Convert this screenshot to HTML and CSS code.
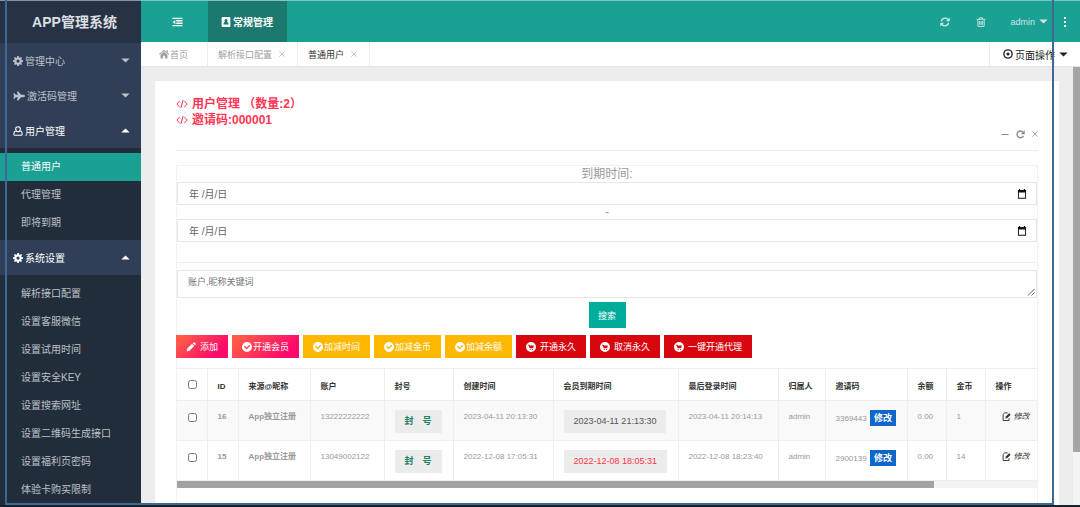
FILE: index.html
```html
<!DOCTYPE html>
<html lang="zh-CN">
<head>
<meta charset="utf-8">
<title>APP管理系统</title>
<link rel="stylesheet" href="styles.css">
</head>
<body>
<svg class="sprite" aria-hidden="true">
  <symbol id="gear" viewBox="0 0 16 16"><path fill-rule="evenodd" d="M6.800 0h2.400l.4 2.200 1.400.6L12.900 1.500l1.600 1.600-1.300 1.900.6 1.400 2.200.4v2.400l-2.200.4-.6 1.400 1.300 1.900-1.600 1.600-1.900-1.300-1.400.6-.4 2.200H6.800l-.4-2.200-1.400-.6-1.900 1.300-1.600-1.600 1.300-1.900-.6-1.400L0 9.200V6.800l2.200-.4.6-1.400-1.300-1.900 1.600-1.600L5 2.800l1.400-.6zM8 5.400a2.600 2.600 0 1 0 0 5.200 2.600 2.600 0 0 0 0-5.200z"/></symbol>
  <symbol id="plane" viewBox="0 0 16 16"><path d="M16 8c0 1-1.300 1.600-2.800 1.600h-2.400L7 14H5.200l1.300-4.400H3.700L2 11.800H.6L1.300 8 .6 4.200H2l1.700 2.200h2.800L5.200 2H7l3.800 4.400h2.400C14.700 6.400 16 7 16 8z"/></symbol>
  <symbol id="user" viewBox="0 0 16 16"><path fill="none" stroke="currentColor" stroke-width="1.700" d="M8 1.200a3.700 3.700 0 0 1 3.700 3.700c0 2.300-1.500 4.300-3.700 4.300S4.300 7.200 4.300 4.900A3.700 3.700 0 0 1 8 1.200zM4.700 7.600C2.400 8.200 1.300 10.300 1.300 12.600c0 1.400.9 2.200 2.200 2.200h9c1.300 0 2.200-.8 2.200-2.200 0-2.300-1.100-4.400-3.400-5"/></symbol>
  <symbol id="outdent" viewBox="0 0 16 16"><path d="M0 1h16v2.200H0zM6 4.900h10v2.200H6zM6 8.800h10V11H6zM0 12.700h16v2.200H0zM4.500 4.600v6.800L.3 8z"/></symbol>
  <symbol id="book" viewBox="0 0 16 16"><path fill-rule="evenodd" d="M2.500 0h11A1.500 1.500 0 0 1 15 1.500v13a1.500 1.500 0 0 1-1.500 1.500h-11A1.500 1.500 0 0 1 1 14.500v-13A1.500 1.500 0 0 1 2.500 0zM8 3.200a2.500 2.500 0 0 0-1.700 4.300C4.700 8.200 4 9.800 4 12h8c0-2.200-.7-3.800-2.300-4.500A2.500 2.500 0 0 0 8 3.200z"/></symbol>
  <symbol id="home" viewBox="0 0 16 16"><path d="M8 1l8 7-1 1.200-7-6-7 6L0 8zM12 1.800h2v4l-2-1.800zM8 4.500l5.600 4.800V15H9.500v-4.200h-3V15H2.400V9.300z"/></symbol>
  <symbol id="refresh" viewBox="0 0 16 16"><path fill="none" stroke="currentColor" stroke-width="2.200" d="M2 6.800A6.200 6.200 0 0 1 12.800 4M14 9.200A6.200 6.200 0 0 1 3.200 12"/><path d="M15.500.8v6H9.500zM.5 15.200v-6h6z"/></symbol>
  <symbol id="trash" viewBox="0 0 16 16"><path fill="none" stroke="currentColor" stroke-width="1.500" d="M3 4.500V15h10V4.500M1 3.700h14M5.300 3.500L6 1.200h4l.7 2.300M5.800 6.500v6M8 6.500v6M10.200 6.500v6"/></symbol>
  <symbol id="target" viewBox="0 0 16 16"><circle cx="8" cy="8" r="6.600" fill="none" stroke="currentColor" stroke-width="2.200"/><circle cx="8" cy="8" r="2.500"/></symbol>
  <symbol id="code" viewBox="0 0 18 16"><path fill="none" stroke="currentColor" stroke-width="1.500" d="M5.500 3.500L1.300 8l4.200 4.500M12.500 3.500L16.700 8l-4.200 4.500M10.600 2L7.400 14"/></symbol>
  <symbol id="reload" viewBox="0 0 16 16"><path fill="none" stroke="currentColor" stroke-width="2.400" d="M13.300 10.500A6 6 0 1 1 12.500 4"/><path d="M15.500.5v7H8.500z"/></symbol>
  <symbol id="cross" viewBox="0 0 16 16"><path fill="none" stroke="currentColor" stroke-width="2" d="M1 1l14 14M15 1L1 15"/></symbol>
  <symbol id="minus" viewBox="0 0 16 16"><path d="M1 8h14v2H1z"/></symbol>
  <symbol id="calendar" viewBox="0 0 16 16"><path fill-rule="evenodd" d="M3 0h2v1.500h6V0h2v1.500h1.500v14h-13v-14H3zM3 5.500V14h10V5.500z"/></symbol>
  <symbol id="pencil" viewBox="0 0 16 16"><path d="M1 15l1-4.500L9.700 2.800l3.500 3.500L5.500 14zM10.700 1.800l1.200-1.200c.5-.5 1.200-.5 1.700 0l1.800 1.800c.5.5.5 1.200 0 1.700l-1.200 1.200z"/></symbol>
  <symbol id="check" viewBox="0 0 16 16"><path fill-rule="evenodd" d="M8 0a8 8 0 1 1 0 16A8 8 0 0 1 8 0zM4.600 6L3 7.600l4.300 4.300 6-6-1.600-1.600-4.400 4.400z"/></symbol>
  <symbol id="cart" viewBox="0 0 16 16"><path fill-rule="evenodd" d="M8 0a8 8 0 1 1 0 16A8 8 0 0 1 8 0zM3.500 4.500V6h1.200l1 4h5.800l1-4.600H6.200l-.3-.9zM6 11v1.500h1.600V11zM9.600 11v1.500h1.600V11z"/></symbol>
  <symbol id="edit" viewBox="0 0 16 16"><path fill="none" stroke="currentColor" stroke-width="1.700" d="M10 1.500H4.500L2 4.500V15h10.500v-4"/><path d="M6 11.500l.7-3.500L12.700 2l2.800 2.800L9.500 10.800z"/></symbol>
  <symbol id="down" viewBox="0 0 10 6"><path d="M0 .5h10L5 5.500z"/></symbol>
  <symbol id="up" viewBox="0 0 10 6"><path d="M0 5.500h10L5 .5z"/></symbol>
  <symbol id="grip" viewBox="0 0 8 8"><path fill="none" stroke="currentColor" d="M1 7.500L7.500 1M4.500 7.500l3-3"/></symbol>
</svg>

<div class="app">
  <aside class="sidebar">
    <h1 class="logo">APP管理系统</h1>
    <nav>
      <button class="group"><svg class="ico"><use href="#gear"/></svg>管理中心<svg class="caret"><use href="#down"/></svg></button>
      <button class="group"><svg class="ico wide-ico"><use href="#plane"/></svg>激活码管理<svg class="caret"><use href="#down"/></svg></button>
      <button class="group open"><svg class="ico"><use href="#user"/></svg>用户管理<svg class="caret"><use href="#up"/></svg></button>
      <ul class="sub">
        <li><a class="active" href="#">普通用户</a></li>
        <li><a href="#">代理管理</a></li>
        <li><a href="#">即将到期</a></li>
      </ul>
      <button class="group open"><svg class="ico"><use href="#gear"/></svg>系统设置<svg class="caret"><use href="#up"/></svg></button>
      <ul class="sub">
        <li><a href="#">解析接口配置</a></li>
        <li><a href="#">设置客服微信</a></li>
        <li><a href="#">设置试用时间</a></li>
        <li><a href="#">设置安全KEY</a></li>
        <li><a href="#">设置搜索网址</a></li>
        <li><a href="#">设置二维码生成接口</a></li>
        <li><a href="#">设置福利页密码</a></li>
        <li><a href="#">体验卡购买限制</a></li>
      </ul>
    </nav>
  </aside>

  <div class="main">
    <header class="topbar">
      <button class="toggle" aria-label="收起菜单"><svg class="ico"><use href="#outdent"/></svg></button>
      <a class="module" href="#"><svg class="ico"><use href="#book"/></svg>常规管理</a>
      <div class="tools">
        <button aria-label="刷新"><svg class="ico"><use href="#refresh"/></svg></button>
        <button aria-label="清理"><svg class="ico"><use href="#trash"/></svg></button>
        <button class="account">admin<svg class="caret"><use href="#down"/></svg></button>
        <button class="more" aria-label="更多"><i></i><i></i><i></i></button>
      </div>
    </header>

    <div class="tabs">
      <a class="tab home" href="#"><svg class="ico"><use href="#home"/></svg>首页</a>
      <a class="tab" href="#">解析接口配置<svg class="close"><use href="#cross"/></svg></a>
      <a class="tab current" href="#">普通用户<svg class="close"><use href="#cross"/></svg></a>
      <button class="pageops"><svg class="ico"><use href="#target"/></svg>页面操作<svg class="caret"><use href="#down"/></svg></button>
    </div>

    <div class="viewport">
      <main class="card">
        <div class="card-head">
          <h2><svg class="code"><use href="#code"/></svg>用户管理 （数量:2）</h2>
          <h2><svg class="code"><use href="#code"/></svg>邀请码:000001</h2>
          <div class="card-tools">
            <button aria-label="最小化"><svg><use href="#minus"/></svg></button>
            <button aria-label="重载"><svg class="big"><use href="#reload"/></svg></button>
            <button aria-label="关闭"><svg class="small"><use href="#cross"/></svg></button>
          </div>
        </div>

        <section class="panel">
          <form class="search">
            <label for="from">到期时间:</label>
            <div class="field"><input id="from" type="text" value="年 /月/日"><svg><use href="#calendar"/></svg></div>
            <label for="to">-</label>
            <div class="field"><input id="to" type="text" value="年 /月/日"><svg><use href="#calendar"/></svg></div>
            <div class="rule"></div>
            <div class="area"><textarea rows="1" aria-label="关键词" placeholder="账户,昵称关键词"></textarea><svg><use href="#grip"/></svg></div>
            <button class="submit" type="button">搜索</button>
          </form>

          <div class="actions">
            <button class="pink wide"><svg><use href="#pencil"/></svg>添加</button>
            <button class="pink"><svg><use href="#check"/></svg>开通会员</button>
            <button class="amber"><svg><use href="#check"/></svg>加减时间</button>
            <button class="amber"><svg><use href="#check"/></svg>加减金币</button>
            <button class="amber"><svg><use href="#check"/></svg>加减余额</button>
            <button class="red wide"><svg><use href="#cart"/></svg>开通永久</button>
            <button class="red wide"><svg><use href="#cart"/></svg>取消永久</button>
            <button class="red wide"><svg><use href="#cart"/></svg>一键开通代理</button>
          </div>

          <div class="table-wrap">
            <table>
              <colgroup>
                <col class="c-check"><col class="c-id"><col class="c-src"><col class="c-acc"><col class="c-ban"><col class="c-date"><col class="c-exp"><col class="c-date"><col class="c-own"><col class="c-code"><col class="c-num"><col class="c-num"><col class="c-op">
              </colgroup>
              <thead>
                <tr><th class="pick"><input type="checkbox" aria-label="全选"></th><th>ID</th><th>来源@昵称</th><th>账户</th><th>封号</th><th>创建时间</th><th>会员到期时间</th><th>最后登录时间</th><th>归属人</th><th>邀请码</th><th>余额</th><th>金币</th><th>操作</th></tr>
              </thead>
              <tbody>
                <tr>
                  <td class="pick"><input type="checkbox" aria-label="选择 16"></td><td><b>16</b></td><td><b>App独立注册</b></td><td>13222222222</td>
                  <td><button class="chip ban">封　号</button></td><td>2023-04-11 20:13:30</td><td><button class="chip">2023-04-11 21:13:30</button></td><td>2023-04-11 20:14:13</td>
                  <td>admin</td><td>3369443 <button class="mod">修改</button></td><td>0.00</td><td>1</td><td><a class="edit" href="#"><svg><use href="#edit"/></svg><em>修改</em></a></td>
                </tr>
                <tr>
                  <td class="pick"><input type="checkbox" aria-label="选择 15"></td><td><b>15</b></td><td><b>App独立注册</b></td><td>13049002122</td>
                  <td><button class="chip ban">封　号</button></td><td>2022-12-08 17:05:31</td><td><button class="chip expired">2022-12-08 18:05:31</button></td><td>2022-12-08 18:23:40</td>
                  <td>admin</td><td>2900139 <button class="mod">修改</button></td><td>0.00</td><td>14</td><td><a class="edit" href="#"><svg><use href="#edit"/></svg><em>修改</em></a></td>
                </tr>
              </tbody>
            </table>
          </div>
          <div class="hscroll"><div class="hthumb"></div></div>
        </section>
      </main>
      <div class="vscroll"><div class="vthumb"></div></div>
    </div>
  </div>
  <div class="frame"></div>
</div>
</body>
</html>
```
FILE: styles.css
```css
* { box-sizing: border-box; }

body {
  margin: 0;
  font-family: "Liberation Sans", "Noto Sans CJK SC", sans-serif;
  font-size: 10px;
  background: #18212e;
}

button, input, textarea { font: inherit; color: inherit; }
button { border: 0; padding: 0; background: none; }
a { color: inherit; text-decoration: none; }
svg { display: block; flex: none; fill: currentColor; }
.sprite { display: none; }
h1, h2, ul { margin: 0; padding: 0; list-style: none; }
.ico { width: 10px; height: 10px; }
.wide-ico { width: 12px; height: 12px; }
.caret { width: 9px; height: 5px; }

.app {
  position: relative;
  display: flex;
  height: 100vh;
  overflow: hidden;
  border-bottom: 2px solid #18212e;
}

/* marker outline laid over the whole window */
.frame {
  position: absolute;
  inset: 0 26px 0 5px;
  border: 2px solid #3f6893;
  border-top: 0;
  pointer-events: none;
}

/* sidebar */
.sidebar { width: 141px; flex: none; background: #222d3c; color: #bdc1c7; }
.logo {
  height: 43px;
  border-top: 1px solid #8794a0;
  padding-left: 8px;
  font-size: 14px;
  line-height: 42px;
  text-align: center;
  color: #dcdfe2;
  background: #263345;
}
.group {
  display: flex;
  align-items: center;
  gap: 2px;
  width: 100%;
  height: 35px;
  padding: 0 11px 0 13px;
  background: #303f57;
}
.group .caret { margin-left: auto; }
.open { color: #fff; }
.sub { padding: 5px 0 3px; }
.sub a { display: block; padding-left: 21px; line-height: 28px; }
.sub .active { background: #1ba094; color: #fff; }

/* top bar */
.main { flex: 1; min-width: 0; display: flex; flex-direction: column; }
.topbar {
  display: flex;
  height: 42px;
  flex: none;
  border-top: 1px solid #7fc5bd;
  background: #1ba094;
  color: #fff;
}
.toggle { width: 67px; display: grid; place-items: center; padding-left: 5px; }
.toggle .ico { width: 11px; }
.module {
  display: flex;
  align-items: center;
  gap: 2px;
  padding: 0 14px 0 13px;
  background: #1b796f;
  font-weight: bold;
}
.tools { display: flex; margin-left: auto; color: #cce9e6; }
.tools button { display: grid; place-items: center; width: 36px; }
.tools .account {
  display: flex;
  align-items: center;
  justify-content: flex-end;
  gap: 4px;
  width: 50px;
  padding-right: 1px;
  font-size: 9px;
}
.tools .more { width: 31px; align-content: center; gap: 2px; }
.more i { width: 2px; height: 2px; background: #fff; }

/* page tabs */
.tabs {
  display: flex;
  height: 25px;
  flex: none;
  background: #fff;
  border-bottom: 1px solid #e4e4e4;
  font-size: 9px;
  color: #a0a0a0;
}
.tab {
  display: flex;
  align-items: center;
  gap: 7px;
  padding: 0 12px 0 10px;
  border-right: 1px solid #eee;
}
.home { gap: 1px; padding: 0 19px 0 18px; }
.current { color: #333; }
.close { width: 6px; height: 6px; color: #b0b0b0; }
.pageops {
  display: flex;
  align-items: center;
  gap: 2px;
  margin-left: auto;
  padding: 0 12px 0 13px;
  border-left: 1px solid #eee;
  font-size: 10px;
  color: #222;
}
.pageops .caret { margin-left: 2px; }

/* content */
.viewport {
  flex: 1;
  min-height: 0;
  display: flex;
  justify-content: space-between;
  padding: 0 0 0 14px;
  background: #ededed;
}
.card {
  flex: 1;
  min-width: 0;
  margin: 14px 14px 0 0;
  padding: 15px 21px 0;
  background: #fff;
  display: flex;
  flex-direction: column;
}
.card-head { border-bottom: 1px solid #eee; padding-bottom: 10px; }
.card-head h2 {
  display: flex;
  align-items: center;
  gap: 4px;
  font-size: 12px;
  line-height: 16px;
  color: #ff3556;
}
.code { width: 12px; height: 12px; }
.card-tools { display: flex; justify-content: flex-end; align-items: center; gap: 7px; height: 12px; color: #888; }
.card-tools svg { width: 8px; height: 8px; }
.card-tools .big { width: 9px; height: 9px; }
.card-tools .small { width: 6px; height: 6px; }

.panel { flex: 1; margin-top: 14px; border: 1px solid #f1f1f1; border-bottom: 0; }

.search { display: flex; flex-direction: column; }
.search label { font-size: 12px; line-height: 14px; text-align: center; color: #999; }
.search label:first-child { line-height: 16px; }
.field, .area {
  display: flex;
  align-items: center;
  border: 1px solid #e6e6e6;
  color: #666;
}
.field { height: 23px; padding: 0 9px 0 11px; }
.field input { flex: 1; min-width: 0; border: 0; padding: 0; background: none; }
.field svg { width: 10px; height: 10px; color: #111; }
.rule { height: 21px; border-bottom: 1px solid #eee; }
.area { height: 28px; margin-top: 7px; padding: 0 1px 1px 10px; }
.area textarea { flex: 1; border: 0; padding: 0; height: 18px; line-height: 14px; resize: none; font-size: 9px; background: none; }
.area textarea::placeholder { color: #757575; }
.area svg { width: 8px; height: 8px; align-self: flex-end; }
.submit { align-self: center; width: 37px; height: 26px; margin-top: 4px; background: #00ad9b; color: #fff; font-size: 9px; }

.actions { display: flex; gap: 4px; margin: 7px 0 10px -1px; }
.actions button {
  display: flex;
  align-items: center;
  gap: 1px;
  height: 23px;
  padding: 0 10px;
  color: #fff;
  font-size: 9px;
}
.actions .wide { gap: 4px; }
.actions svg { width: 10px; height: 10px; }
.pink { background: linear-gradient(135deg, #ff5b47 10%, #ff0a6c 80%); }
.amber { background: #ffb800; }
.red { background: #d7060f; }

/* user table */
.table-wrap { overflow: hidden; }
table { width: 978px; table-layout: fixed; border-collapse: collapse; font-size: 8px; color: #999; }
.c-check { width: 30px; }
.c-id { width: 31px; }
.c-src { width: 72px; }
.c-acc { width: 74px; }
.c-ban { width: 69px; }
.c-date { width: 100px; }
.c-exp { width: 125px; }
.c-own { width: 47px; }
.c-code { width: 82px; }
.c-num { width: 39px; }
th, td {
  padding: 9px 10px 0;
  border: 1px solid #eee;
  border-left: 0;
  text-align: left;
  vertical-align: top;
  white-space: nowrap;
  line-height: 13px;
}
th { height: 32px; padding: 3px 10px 0; vertical-align: middle; color: #333; }
td { height: 40px; }
tbody tr:nth-child(odd) { background: #f9f9f9; }
.pick { padding-left: 11px; }
.pick input { display: block; width: 9px; height: 9px; margin: 0; }
th.pick { padding-top: 0; }
td.pick { padding-top: 12px; }
.chip { display: block; height: 23px; padding: 0 10px; background: #ececec; font-size: 9px; color: #555; }
.ban { color: #1d8060; font-weight: bold; }
.expired { color: #ff3345; }
.mod { height: 16px; margin-left: 1px; padding: 0 4px; background: #1065cb; color: #fff; font-size: 9px; font-weight: bold; }
.edit { display: flex; align-items: center; gap: 3px; padding-left: 6px; color: #333; }
.edit svg { width: 9px; height: 9px; }

/* scroll bars */
.hscroll { height: 7px; background: #f3f3f3; }
.hthumb { width: 88%; height: 7px; background: #a3a3a3; }
.vscroll { width: 7px; background: #f4f4f4; }
.vthumb { height: 88%; background: #a5a5a5; }
```
